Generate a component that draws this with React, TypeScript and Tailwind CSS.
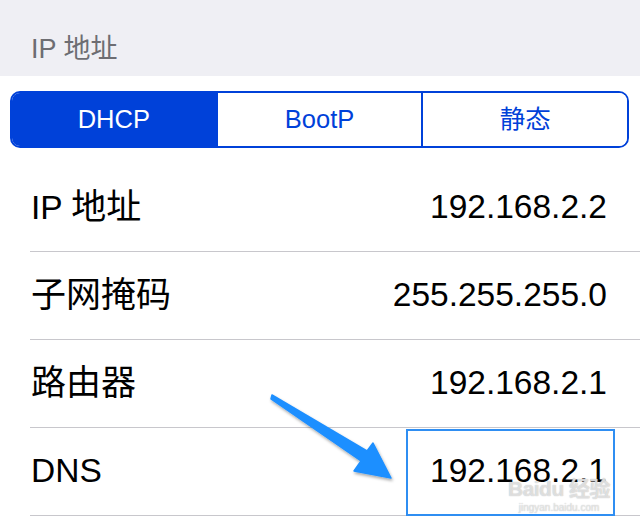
import React from 'react';

// label parts: [text, isCjk]
const rows: { label: [string, boolean][]; value: string }[] = [
  { label: [['IP ', false], ['地址', true]], value: '192.168.2.2' },
  { label: [['子网掩码', true]], value: '255.255.255.0' },
  { label: [['路由器', true]], value: '192.168.2.1' },
  { label: [['DNS', false]], value: '192.168.2.1' },
];

const segments = ['DHCP', 'BootP', '静态'];

export default function App() {
  return (
    <div className="relative w-[640px] h-[530px] overflow-hidden bg-white font-['Liberation_Sans','Noto_Sans_CJK_SC',sans-serif]">
      <div className="h-[76px] bg-[#efeff4] flex items-end pl-[31px] pb-[13px] text-[27px] leading-none text-[#6d6d72]">
        IP 地址
      </div>

      <div className="pl-[10px] pr-[11px] pt-[15px]">
        <div className="flex h-[57px] rounded-[10px] border-2 border-[#0041d9] overflow-hidden">
          {segments.map((s, i) => (
            <div
              key={s}
              className={
                'flex-1 flex items-center justify-center text-[25.5px] ' +
                (i === 0 ? 'bg-[#0041d9] text-white' : 'bg-white text-[#0041d9] border-l-2 border-[#0041d9]')
              }
            >
              {s}
            </div>
          ))}
        </div>
      </div>

      <div className="mt-[16px] pl-[30px]">
        {rows.map((r) => (
          <div
            key={r.value + r.label[0][0]}
            className="h-[88px] flex items-center justify-between pr-[33px] border-b border-[#c8c7cc] text-[33.5px] text-black"
          >
            <span className="pl-[1px]">
              {r.label.map(([t, cjk]) => (
                <span key={t} className={cjk ? 'text-[35px]' : ''}>
                  {t}
                </span>
              ))}
            </span>
            <span>{r.value}</span>
          </div>
        ))}
      </div>

      {/* highlight box around DNS value */}
      <div className="absolute left-[406px] top-[429px] w-[209px] h-[87px] border-2 border-[#2f8ef2]" />

      {/* arrow */}
      <svg className="absolute left-0 top-0" width="640" height="530" viewBox="0 0 640 530">
        <defs>
          <filter id="sh" x="-20%" y="-20%" width="140%" height="140%">
            <feDropShadow dx="1" dy="2" stdDeviation="1.5" floodColor="#000" floodOpacity="0.35" />
          </filter>
        </defs>
        <polygon
          points="272,395 367,451 373,443 391,478 354,471 361,461 271,399"
          fill="#1e8fff"
          stroke="#1e8fff"
          strokeWidth="1.5"
          strokeLinejoin="round"
          filter="url(#sh)"
        />
      </svg>

      {/* watermark */}
      <div className="absolute left-[508px] top-[478px] flex flex-col items-center leading-none text-white/60 [text-shadow:0_0_1px_#aaa]">
        <span className="text-[21px] font-bold tracking-tight">Baidu 经验</span>
        <span className="text-[10px] mt-[4px]">jingyan.baidu.com</span>
      </div>
    </div>
  );
}
